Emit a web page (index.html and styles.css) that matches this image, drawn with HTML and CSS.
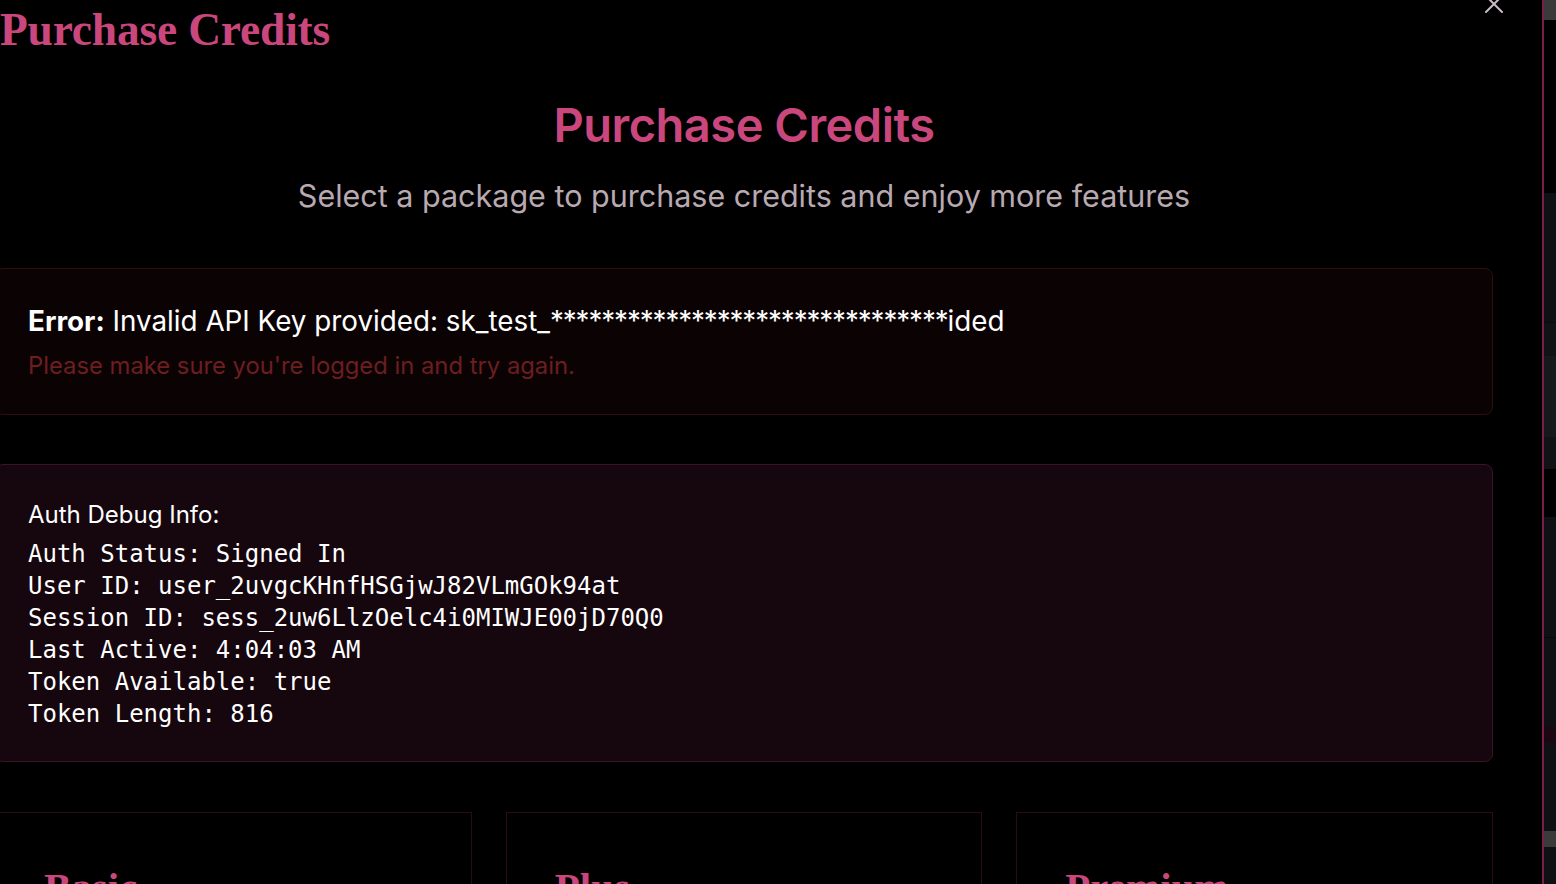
FILE: index.html
```html
<!DOCTYPE html>
<html lang="en">
<head>
<meta charset="utf-8">
<title>Purchase Credits</title>
<link rel="stylesheet" href="styles.css">
</head>
<body>
<div class="screen">
  <div class="modal">
    <div class="content">
      <header class="modal-head">
        <h2 class="modal-title">Purchase Credits</h2>
        <button class="close" aria-label="Close">
          <svg width="22" height="22" viewBox="0 0 22 22"><path d="M3 3 L19 19 M19 3 L3 19" stroke="#c9bcc4" stroke-width="2" stroke-linecap="round" fill="none"/></svg>
        </button>
      </header>
      <h1 class="title">Purchase Credits</h1>
      <p class="subtitle">Select a package to purchase credits and enjoy more features</p>

      <section class="error-box">
        <p class="error-line"><strong>Error:</strong> Invalid API Key provided: sk_test_<span class="stars">*******************************</span>ided</p>
        <p class="error-hint">Please make sure you're logged in and try again.</p>
      </section>

      <section class="debug-box">
        <h3 class="debug-title">Auth Debug Info:</h3>
        <div class="debug-lines">
          <div>Auth Status: Signed In</div>
          <div>User ID: user_2uvgcKHnfHSGjwJ82VLmGOk94at</div>
          <div>Session ID: sess_2uw6LlzOelc4i0MIWJE00jD70Q0</div>
          <div>Last Active: 4:04:03 AM</div>
          <div>Token Available: true</div>
          <div>Token Length: 816</div>
        </div>
      </section>

      <section class="plans">
        <div class="plan"><h3 class="plan-name">Basic</h3></div>
        <div class="plan"><h3 class="plan-name">Plus</h3></div>
        <div class="plan"><h3 class="plan-name">Premium</h3></div>
      </section>
    </div>
  </div>
  <div class="strip">
    <div class="s s1"></div>
    <div class="s s2"></div>
    <div class="s s3"></div>
    <div class="s s4"></div>
    <div class="s s5"></div>
    <div class="s s6"></div>
    <div class="s s7"></div>
    <div class="s s8"></div>
    <div class="s s9"></div>
    <div class="s s10"></div>
    <div class="s s11"></div>
    <div class="s s12"></div>
    <div class="s s13"></div>
    <div class="s s14"></div>
    <div class="s s15"></div>
    <div class="s s16"></div>
  </div>
</div>
</body>
</html>
```
FILE: styles.css
```css
* { box-sizing: border-box; }
html, body { margin: 0; padding: 0; background: #000; }
body { width: 1556px; height: 884px; overflow: hidden; font-family: Inter, "Noto Sans", sans-serif; color: #fff; }

.screen { display: flex; height: 884px; }

.modal {
  width: 1544px;
  flex: none;
  height: 884px;
  overflow: hidden;
  background: #000;
  border-right: 2px solid #7a1f47;
}

.content {
  margin-left: -5px;
  width: 1498px;
}

.modal-head {
  display: flex;
  justify-content: space-between;
  align-items: flex-start;
  height: 60px;
  margin-top: 0;
}
.modal-title {
  margin: 0 0 0 5px;
  font-family: "Liberation Serif", "Times New Roman", serif;
  font-weight: 700;
  font-size: 45.5px;
  line-height: 60px;
  color: #c9477c;
  letter-spacing: -0.2px;
}
.close {
  margin: -7px -12px 0 0;
  padding: 0;
  background: none;
  border: 0;
  width: 22px;
  height: 22px;
}
.close svg { display: block; }

.title {
  margin: 37px 0 0;
  text-align: center;
  font-weight: 600;
  font-size: 47px;
  line-height: 56px;
  color: #c9477c;
  letter-spacing: -0.5px;
}
.subtitle {
  margin: 23px 0 0;
  text-align: center;
  font-size: 30.5px;
  line-height: 40px;
  color: #b9a9b1;
}

.error-box {
  margin-top: 52px;
  background: #0b0303;
  border: 1px solid #2f0e10;
  border-radius: 8px;
  padding: 34px 32px 32px;
}
.error-line {
  margin: 0;
  font-size: 27.8px;
  line-height: 36px;
  color: #fff;
}
.error-line strong { font-weight: 700; }
.stars { letter-spacing: -1.1px; }
.error-hint {
  margin: 11px 0 0;
  font-size: 23.8px;
  line-height: 32px;
  color: #6c1e20;
}

.debug-box {
  margin-top: 49px;
  background: #16060e;
  border: 1px solid #3d1228;
  border-radius: 8px;
  padding: 34px 32px 31px;
}
.debug-title {
  margin: 0;
  font-size: 24px;
  line-height: 32px;
  font-weight: 400;
  color: #fff;
}
.debug-lines {
  margin-top: 7px;
  font-family: "DejaVu Sans Mono", monospace;
  font-size: 24px;
  line-height: 32px;
  color: #fff;
}

.plans {
  margin-top: 50px;
  display: grid;
  grid-template-columns: repeat(3, 1fr);
  gap: 34px;
}
.plan {
  border: 1px solid #2a0a1c;
  height: 200px;
  padding: 49px 48px;
}
.plan-name {
  margin: 0;
  font-family: "Liberation Serif", "Times New Roman", serif;
  font-weight: 700;
  font-size: 41px;
  line-height: 50px;
  color: #c9477c;
}

.strip { flex: 1; display: flex; flex-direction: column; background: #0f1013; }
.s { flex: none; }
.s1 { height: 20px; background: #3a3a3a; }
.s2 { height: 173px; background: #000; }
.s3 { height: 129px; background: #0f1013; }
.s4 { height: 1px; background: #0a0a0c; }
.s5 { height: 33px; background: #111215; }
.s6 { height: 81px; background: #17181b; }
.s7 { height: 32px; background: #111215; }
.s8 { height: 48px; background: #000; }
.s9 { height: 120px; background: #0f1013; }
.s10 { height: 1px; background: #08080a; }
.s11 { height: 89px; background: #0f1013; }
.s12 { height: 16px; background: #1a0810; }
.s13 { height: 88px; background: #0f1013; }
.s14 { height: 16px; background: #3a3a3a; }
.s15 { height: 37px; background: #0f1013; }
.s16 { height: 1px; background: #0f1013; }
```
